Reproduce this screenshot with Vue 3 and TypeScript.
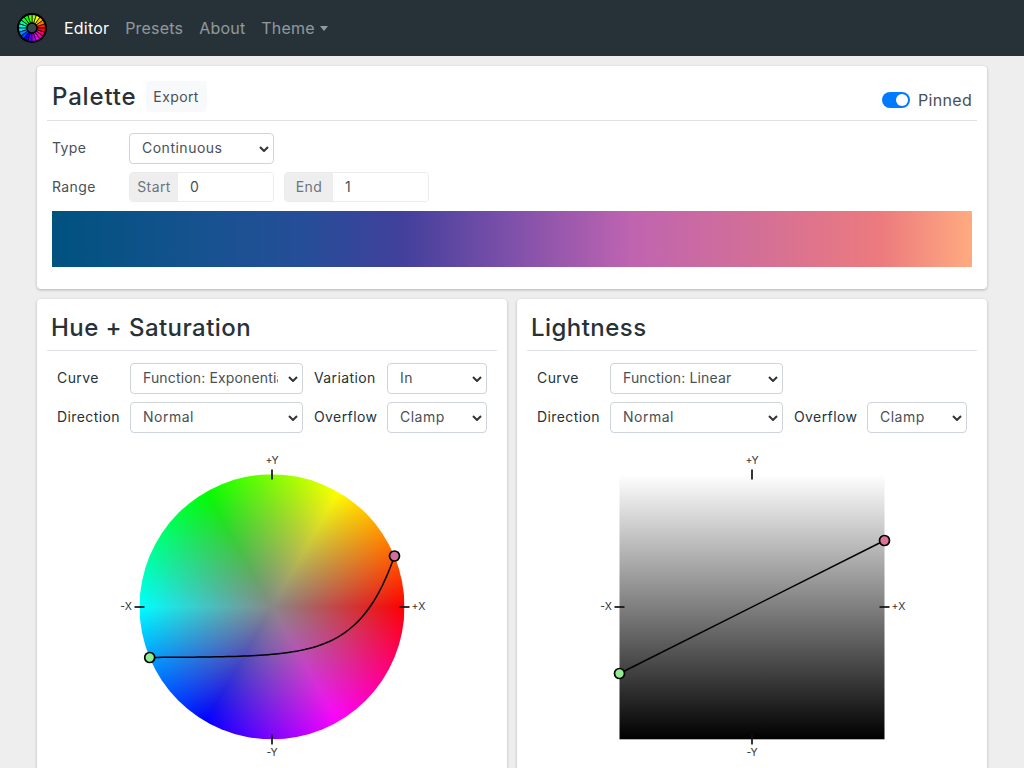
<script setup lang="ts">
import { computed } from "vue";

type Point = { x: number; y: number }

const navLinks = ["Presets", "About"]
const stops = [
  "#00527f 0%", "#16528f 16%", "#254e98 27%", "#41409b 38%", "#7f50aa 50%",
  "#bf64b0 63%", "#d26f98 76%", "#ec7a7e 90%", "#ffab80 100%",
]
const paletteGradient = `linear-gradient(to right, ${stops.join(", ")})`

const ticks = [
  { x1: 132.5, y1: -5, x2: 132.5, y2: 5 },
  { x1: 132.5, y1: 260, x2: 132.5, y2: 270 },
  { x1: -5, y1: 132.5, x2: 5, y2: 132.5 },
  { x1: 260, y1: 132.5, x2: 270, y2: 132.5 },
]

// easeInExpo between the two handles
const huePath = computed<string>(() => {
  const a: Point = { x: 10.2, y: 183 }
  const b: Point = { x: 255, y: 81.5 }
  const parts: string[] = []
  for (let i = 0; i <= 60; i++) {
    const t = i / 60
    const e = t === 0 ? 0 : Math.pow(2, 10 * (t - 1))
    const x = a.x + (b.x - a.x) * t
    const y = a.y + (b.y - a.y) * e
    parts.push(`${i ? "L" : "M"}${x.toFixed(2)} ${y.toFixed(2)}`)
  }
  return parts.join(" ")
})

const logoSegments = computed(() => {
  const n = 20
  const out: { d: string; fill: string }[] = []
  for (let i = 0; i < n; i++) {
    const a0 = (i / n) * Math.PI * 2
    const a1 = ((i + 1) / n) * Math.PI * 2
    const p = (r: number, a: number) => `${(15 + r * Math.cos(a)).toFixed(2)} ${(15 - r * Math.sin(a)).toFixed(2)}`
    out.push({
      d: `M${p(5, a0)} L${p(14, a0)} L${p(14, a1)} L${p(5, a1)} Z`,
      fill: `hsl(${(((i + 0.5) / n) * 360).toFixed(0)}, 100%, 50%)`,
    })
  }
  return out
})
</script>

<template>
  <div class="page">
    <nav class="navbar">
      <svg class="logo" width="30" height="30" viewBox="0 0 30 30">
        <path v-for="(s, i) in logoSegments" :key="i" :d="s.d" :fill="s.fill" stroke="#000" stroke-width="0.7" />
        <circle cx="15" cy="15" r="14" fill="none" stroke="#000" stroke-width="2" />
        <circle cx="15" cy="15" r="5" fill="#37474f" stroke="#000" stroke-width="1.5" />
      </svg>
      <a class="nav-link active">Editor</a>
      <a v-for="l in navLinks" :key="l" class="nav-link">{{ l }}</a>
      <a class="nav-link">Theme<span class="caret"></span></a>
    </nav>

    <main class="container">
      <section class="card">
        <header class="palette-head">
          <h1 class="title palette-title">Palette</h1>
          <button class="export">Export</button>
          <label class="pinned"><span class="switch"><span class="knob"></span></span>Pinned</label>
        </header>
        <div class="palette-body">
          <div class="row">
            <span class="label">Type</span>
            <select class="select type-select"><option>Continuous</option></select>
          </div>
          <div class="row">
            <span class="label">Range</span>
            <div class="input-group">
              <span class="addon">Start</span>
              <input class="input" value="0" />
            </div>
            <div class="input-group">
              <span class="addon">End</span>
              <input class="input" value="1" />
            </div>
          </div>
          <div class="gradient" :style="{ background: paletteGradient }"></div>
        </div>
      </section>

      <div class="panels">
        <section class="card panel">
          <h2 class="title panel-title">Hue + Saturation</h2>
          <div class="controls">
            <span class="ctl-label">Curve</span>
            <select class="select func-select"><option>Function: Exponential</option></select>
            <span class="ctl-label">Variation</span>
            <select class="select"><option>In</option></select>
            <span class="ctl-label">Direction</span>
            <select class="select"><option>Normal</option></select>
            <span class="ctl-label">Overflow</span>
            <select class="select"><option>Clamp</option></select>
          </div>
          <div class="graph">
            <div class="wheel"></div>
            <svg class="overlay" width="330" height="330" viewBox="-32.5 -32.5 330 330">
              <line v-for="(t, i) in ticks" :key="i" v-bind="t" class="tick" />
              <text class="axis" x="132.5" y="-11" text-anchor="middle">+Y</text>
              <text class="axis" x="132.5" y="281" text-anchor="middle">-Y</text>
              <text class="axis" x="-13.5" y="135.5" text-anchor="middle">-X</text>
              <text class="axis" x="279" y="135.5" text-anchor="middle">+X</text>
              <path :d="huePath" fill="none" stroke="#000" stroke-width="1.5" />
              <circle cx="10.2" cy="183" r="5" fill="#90ee90" class="handle" />
              <circle cx="255" cy="81.5" r="5" fill="#d0709a" class="handle" />
            </svg>
          </div>
        </section>

        <section class="card panel">
          <h2 class="title panel-title">Lightness</h2>
          <div class="controls">
            <span class="ctl-label">Curve</span>
            <select class="select func-select"><option>Function: Linear</option></select>
            <span></span>
            <span></span>
            <span class="ctl-label">Direction</span>
            <select class="select"><option>Normal</option></select>
            <span class="ctl-label">Overflow</span>
            <select class="select"><option>Clamp</option></select>
          </div>
          <div class="graph">
            <div class="ramp"></div>
            <svg class="overlay" width="330" height="330" viewBox="-32.5 -32.5 330 330">
              <line v-for="(t, i) in ticks" :key="i" v-bind="t" class="tick" />
              <text class="axis" x="132.5" y="-11" text-anchor="middle">+Y</text>
              <text class="axis" x="132.5" y="281" text-anchor="middle">-Y</text>
              <text class="axis" x="-13.5" y="135.5" text-anchor="middle">-X</text>
              <text class="axis" x="279" y="135.5" text-anchor="middle">+X</text>
              <line x1="0" y1="199" x2="265" y2="66" stroke="#000" stroke-width="1.5" />
              <circle cx="0" cy="199" r="5" fill="#90ee90" class="handle" />
              <circle cx="265" cy="66" r="5" fill="#e0709a" class="handle" />
            </svg>
          </div>
        </section>
      </div>
    </main>
  </div>
</template>

<style>
html, body {
  margin: 0;
  overflow: hidden;
  background: #eee;
}
</style>

<style scoped>
.page {
  font-family: Inter, "Liberation Sans", sans-serif;
  font-size: 14px;
  letter-spacing: 0.4px;
  color: #263238;
  height: 768px;
  overflow: hidden;
}

.navbar {
  height: 56px;
  background: #263238;
  display: flex;
  align-items: center;
  padding: 0 16px;
  box-sizing: border-box;
}
.logo {
  margin: 0 9px 0 1px;
  flex: none;
}
.nav-link {
  font-size: 16px;
  padding: 0 8px;
  letter-spacing: 0.2px;
  color: rgba(255, 255, 255, 0.5);
}
.nav-link.active {
  color: #fff;
}
.caret {
  display: inline-block;
  margin-left: 5px;
  vertical-align: 3px;
  border-top: 5px solid;
  border-left: 4.5px solid transparent;
  border-right: 4.5px solid transparent;
}

.container {
  width: 950px;
  margin: 0 auto;
  padding-top: 10px;
  display: flex;
  flex-direction: column;
  gap: 10px;
}
.card {
  background: #fff;
  border-radius: 4px;
  box-shadow: 0 1px 3px rgba(0, 0, 0, 0.25);
  padding: 10px;
}
.title {
  margin: 0;
  font-size: 24px;
  font-weight: 500;
  line-height: 36px;
  letter-spacing: 0.45px;
  color: #263238;
}
.palette-title {
  letter-spacing: 0.85px;
  margin-top: -2px;
}

.palette-head {
  display: flex;
  align-items: center;
  gap: 9px;
  height: 44px;
  padding: 0 5px;
  border-bottom: 1px solid #dee2e6;
}
.export {
  font: inherit;
  letter-spacing: inherit;
  height: 31px;
  width: 61px;
  padding: 0;
  border: 0;
  border-radius: 4px;
  background: #f8f9fa;
  color: #495057;
  margin-top: -3px;
}
.pinned {
  margin-left: auto;
  display: flex;
  align-items: center;
  gap: 8px;
  font-size: 16px;
  letter-spacing: 0.3px;
  color: #495057;
  margin-top: 3px;
}
.switch {
  width: 28px;
  height: 16px;
  border-radius: 8px;
  background: #007bff;
  position: relative;
}
.knob {
  position: absolute;
  top: 2px;
  right: 2px;
  width: 12px;
  height: 12px;
  border-radius: 50%;
  background: #fff;
}

.palette-body {
  padding: 12px 5px 12px;
  display: flex;
  flex-direction: column;
  gap: 8px;
}
.row {
  display: flex;
  align-items: center;
  gap: 10px;
}
.label {
  width: 67px;
  color: #495057;
  padding-bottom: 2px;
}
.select {
  appearance: none;
  font: inherit;
  letter-spacing: 0.5px;
  height: 31px;
  min-width: 0;
  width: 100%;
  box-sizing: border-box;
  padding: 0 24px 2px 12px;
  color: #495057;
  background: #fff url("data:image/svg+xml,%3Csvg xmlns='http://www.w3.org/2000/svg' width='10' height='6' viewBox='0 0 10 6'%3E%3Cpath d='M1 1l4 4 4-4' fill='none' stroke='%23333' stroke-width='2'/%3E%3C/svg%3E") no-repeat right 4px center;
  border: 1px solid #ced4da;
  border-radius: 4px;
}
.func-select {
  letter-spacing: 0.15px;
}
.type-select {
  width: 145px;
}
.input-group {
  display: flex;
  width: 145px;
  height: 30px;
  box-sizing: border-box;
  border: 1px solid #e9ecef;
  border-radius: 4px;
  overflow: hidden;
}
.addon {
  background: #eee;
  color: #6c757d;
  width: 48px;
  padding-bottom: 2px;
  box-sizing: border-box;
  display: flex;
  align-items: center;
  justify-content: center;
}
.input {
  font: inherit;
  flex: 1;
  min-width: 0;
  border: 0;
  outline: 0;
  padding: 0 12px 2px;
  color: #495057;
}
.gradient {
  height: 56px;
  margin-top: 1px;
}

.panels {
  display: grid;
  grid-template-columns: minmax(0, 1fr) minmax(0, 1fr);
  gap: 10px;
}
.panel {
  height: 560px;
}
.panel-title {
  padding: 1px 4px 0;
  height: 42px;
  box-sizing: border-box;
  border-bottom: 1px solid #dee2e6;
}
.controls {
  display: grid;
  grid-template-columns: 62px 173px 62px 100px;
  column-gap: 11px;
  row-gap: 8px;
  align-items: center;
  padding: 12px 10px 0;
}
.ctl-label {
  color: #263238;
  white-space: nowrap;
  padding-bottom: 2px;
}
.graph {
  position: relative;
  width: 265px;
  height: 265px;
  margin: 41px auto 0;
}
.wheel {
  width: 265px;
  height: 265px;
  border-radius: 50%;
  transform: translate(-0.5px, 0.3px);
  background:
    radial-gradient(closest-side, #888, rgba(136, 136, 136, 0)),
    conic-gradient(from 90deg, #f00, #f0f, #00f, #0ff, #0f0, #ff0, #f00);
}
.ramp {
  width: 265px;
  height: 265px;
  transform: translate(-0.5px, 0.3px);
  background: linear-gradient(to bottom, #fff, #000);
}
.overlay {
  position: absolute;
  top: -32.5px;
  left: -32.5px;
  overflow: visible;
}
.tick {
  stroke: #111;
  stroke-width: 1.7;
}
.axis {
  font-size: 10.5px;
  letter-spacing: 0;
  fill: #333;
}
.handle {
  stroke: #000;
  stroke-width: 1.7;
}
</style>
